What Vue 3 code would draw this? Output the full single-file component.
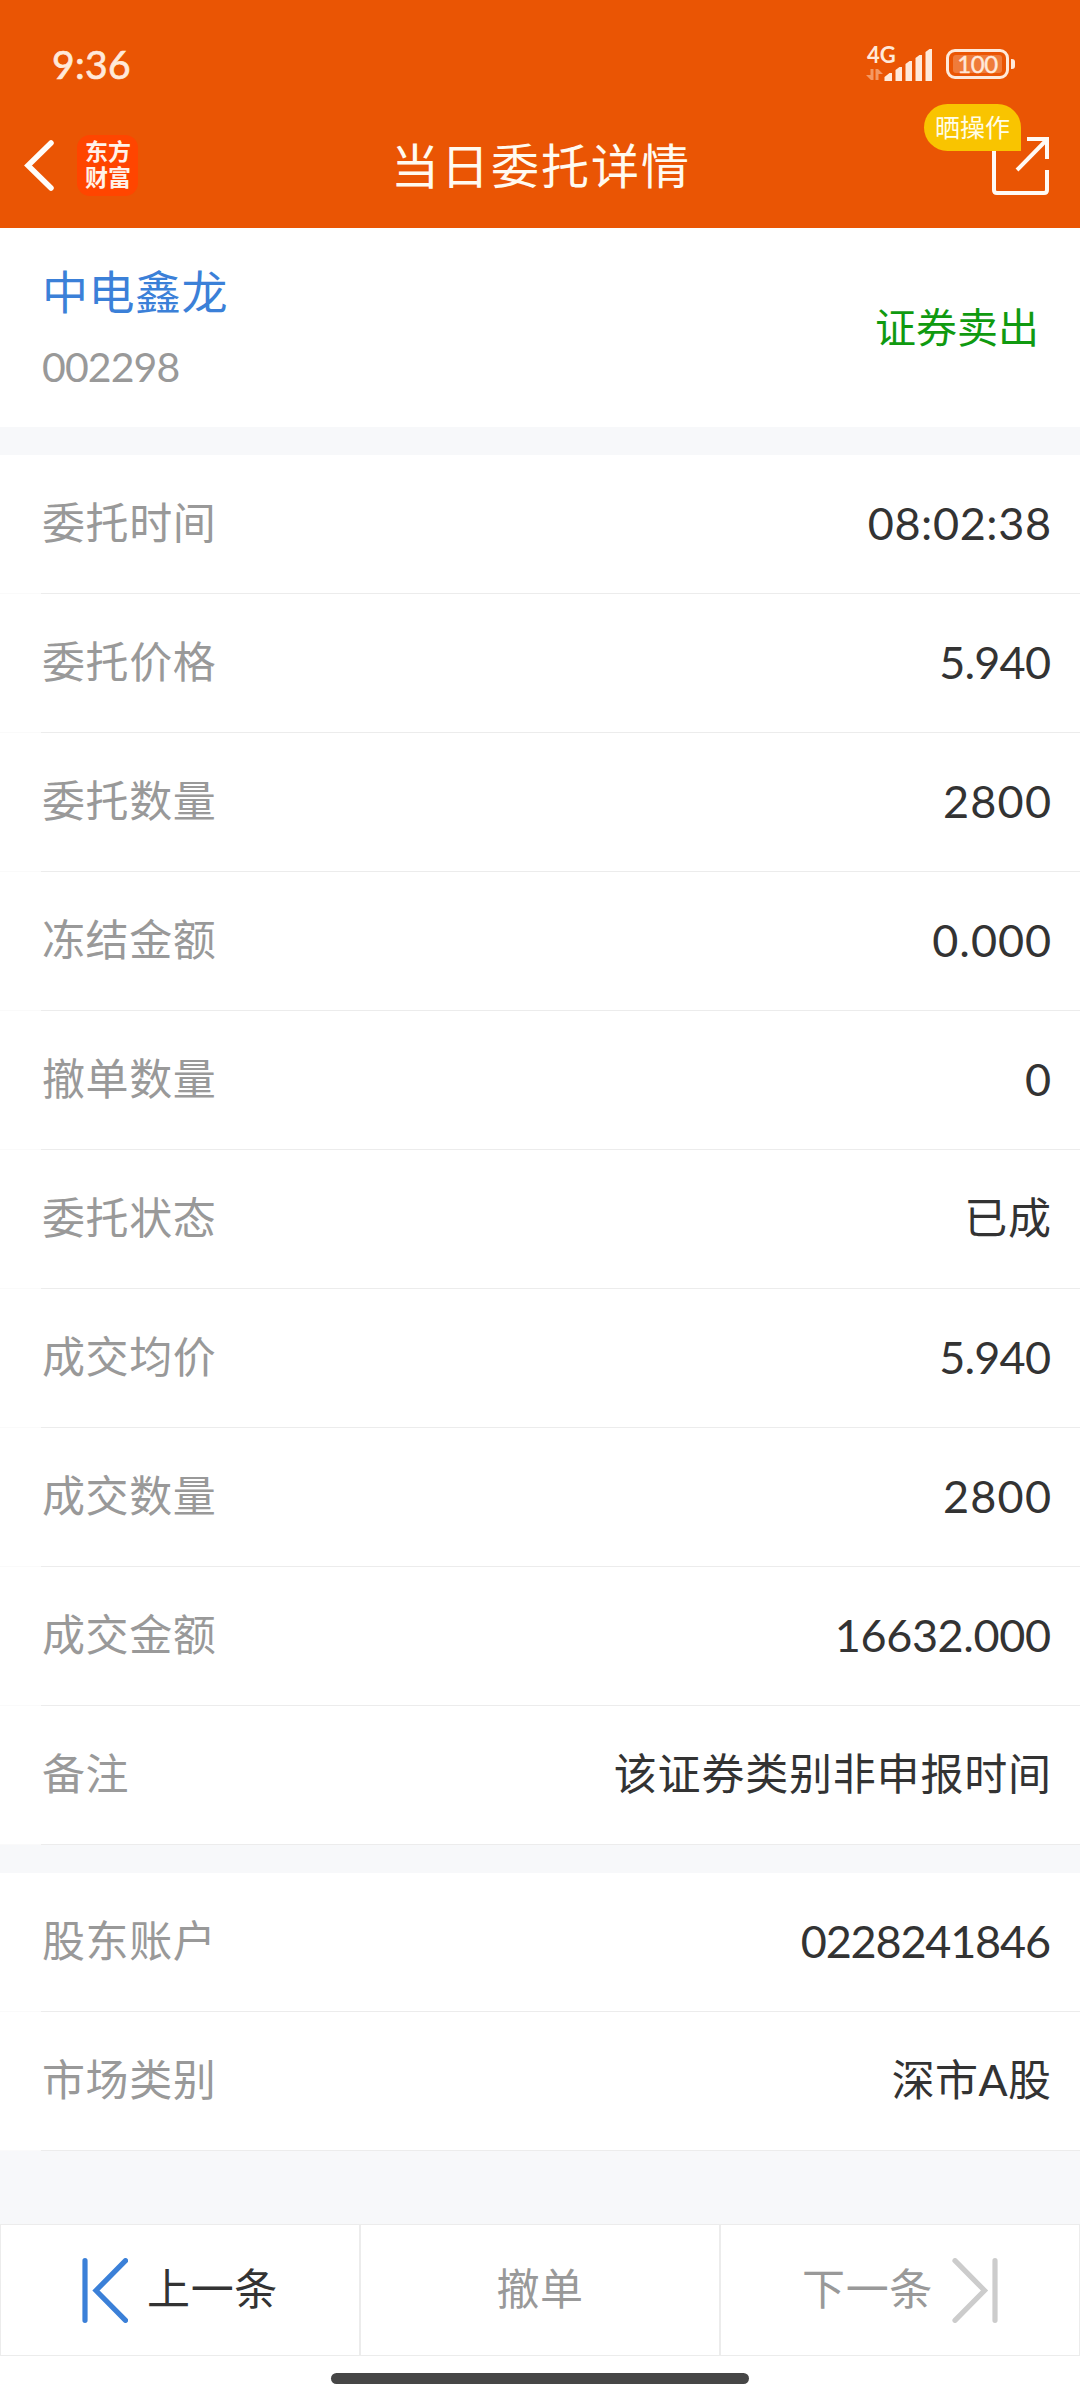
<template>
  <div class="page">
    <header class="header">
      <div class="status">
        <span class="time">9:36</span>
        <div class="status-right">
          <div class="signal">
            <span class="net">4G</span>
            <svg class="signal-icon" width="68" height="34" viewBox="0 0 68 34">
              <g fill="#ffe9da" opacity="0.45">
                <path d="M4.5 22h3v11h-2.500l-5-5h4.500z" />
                <path d="M9.500 33v-11h2.500l5 5h-4.500v6z" />
              </g>
              <g fill="#ffe9da">
                <path d="M18.500 34v-4l5-4h2.500v8z" />
                <path d="M29.500 34v-11l4-3h2.500v14z" />
                <path d="M39.500 34v-17l4-3h2.500v20z" />
                <path d="M49.500 34v-23l4-3h2.500v26z" />
                <path d="M59.500 34v-29l4-3h2.500v32z" />
              </g>
            </svg>
          </div>
          <div class="battery">
            <div class="battery-level">100</div>
          </div>
          <i class="battery-cap"></i>
        </div>
      </div>
      <nav class="nav">
        <div class="nav-left">
          <svg width="32" height="52" viewBox="0 0 32 52">
            <path d="M28 4L5 26.500l23 22.500" fill="none" stroke="#fffdfa" stroke-width="5.500" stroke-linecap="round" />
          </svg>
          <div class="logo">
            <span>东方财富</span>
          </div>
        </div>
        <h1 class="title">当日委托详情</h1>
        <div class="nav-right">
          <div class="share">
            <svg width="58" height="60" viewBox="0 0 58 60">
              <g fill="none" stroke="#fffaf5" stroke-width="4">
                <path d="M2 5v50q0 3 3 3h47q3 0 3-3V35" />
                <path d="M25 35L54.500 5M35 4h20v20" />
              </g>
            </svg>
            <span class="tip">晒操作</span>
          </div>
        </div>
      </nav>
    </header>

    <section class="stock">
      <div>
        <div class="stock-name">中电鑫龙</div>
        <div class="stock-code">002298</div>
      </div>
      <div class="side">证券卖出</div>
    </section>

    <section v-for="(group, i) in groups" :key="i" class="group">
      <div v-for="row in group" :key="row.label" class="row">
        <span class="label">{{ row.label }}</span>
        <span
          class="value"
          :class="{ cjk: row.cjk }"
          :style="{ letterSpacing: row.gap + 'px', marginRight: -row.gap + 'px' }"
        >{{ row.value }}</span>
      </div>
    </section>

    <div class="spacer"></div>

    <footer class="footer">
      <button class="btn active">
        <svg width="46" height="65" viewBox="0 0 46 65">
          <path d="M3 2.700v59.600M43.500 2.700L14 32.500l29.500 29.800" fill="none" stroke="#3b80d8" stroke-width="5.200" stroke-linecap="round" />
        </svg>
        <span>上一条</span>
      </button>
      <button class="btn"><span>撤单</span></button>
      <button class="btn">
        <span>下一条</span>
        <svg width="46" height="65" viewBox="0 0 46 65">
          <path d="M43 2.700v59.600M3 2.700L32.500 32.500L3 62.300" fill="none" stroke="#ccc" stroke-width="5.200" stroke-linecap="round" />
        </svg>
      </button>
    </footer>
    <div class="home"><i></i></div>
  </div>
</template>

<script setup>
// gap: letter spacing of the value in px
const groups = [
  [
    { label: '委托时间', value: '08:02:38', gap: 0.6 },
    { label: '委托价格', value: '5.940', gap: -0.8 },
    { label: '委托数量', value: '2800', gap: 1.2 },
    { label: '冻结金额', value: '0.000', gap: 0.9 },
    { label: '撤单数量', value: '0', gap: 0 },
    { label: '委托状态', value: '已成', gap: 0.8, cjk: true },
    { label: '成交均价', value: '5.940', gap: -0.8 },
    { label: '成交数量', value: '2800', gap: 1.2 },
    { label: '成交金额', value: '16632.000', gap: -0.4 },
    { label: '备注', value: '该证券类别非申报时间', gap: 0.8, cjk: true },
  ],
  [
    { label: '股东账户', value: '0228241846', gap: -1.2 },
    { label: '市场类别', value: '深市A股', gap: 0.4, cjk: true },
  ],
];
</script>

<style>
body {
  margin: 0;
  background: #fff;
}
</style>

<style scoped>
.page {
  width: 1080px;
  height: 2400px;
  display: flex;
  flex-direction: column;
  overflow: hidden;
  background: #f7f8fa;
  color: #333;
  font-family: Lato, "Noto Sans CJK SC", sans-serif;
}
.header {
  height: 228px;
  background: #ea5504;
}
.status {
  height: 102px;
  padding: 26px 65px 0 52px;
  box-sizing: border-box;
  display: flex;
  justify-content: space-between;
  align-items: center;
  color: #ffe9da;
}
.time {
  font-size: 39px;
  line-height: 50px;
  letter-spacing: 0.3px;
  -webkit-text-stroke: 0.7px #ffe9da;
}
.status-right {
  display: flex;
  align-items: center;
}
.signal {
  position: relative;
  width: 68px;
  height: 34px;
  margin-right: 12px;
}
.signal-icon {
  display: block;
}
.net {
  position: absolute;
  left: 1px;
  top: -4px;
  font-size: 22px;
  line-height: 24px;
  font-weight: 700;
}
.battery {
  width: 63px;
  height: 30px;
  box-sizing: border-box;
  padding: 3px 4px;
  border: 3px solid #ffe9da;
  border-radius: 9px;
}
.battery-level {
  height: 18px;
  border-radius: 3px;
  background: rgba(255, 233, 218, 0.26);
  font-size: 24px;
  line-height: 17px;
  letter-spacing: -0.5px;
  text-align: center;
  -webkit-text-stroke: 0.4px #ffe9da;
}
.battery-cap {
  width: 4px;
  height: 10px;
  margin-left: 2px;
  border-radius: 0 3px 3px 0;
  background: #ffe9da;
}
.nav {
  height: 126px;
  display: grid;
  grid-template-columns: 1fr auto 1fr;
  align-items: center;
}
.nav-left {
  display: flex;
  align-items: center;
  gap: 22px;
  padding-left: 23px;
}
.logo {
  width: 61px;
  height: 61px;
  box-sizing: border-box;
  padding: 2px 7px 0 8px;
  border-radius: 13px;
  background: #ff4500;
  color: #fff2ea;
  font-family: "Noto Sans CJK SC", sans-serif;
  font-size: 23px;
  line-height: 26px;
  font-weight: 700;
}
.title {
  margin: 0;
  padding-top: 1px;
  font-size: 48px;
  line-height: 60px;
  font-weight: 400;
  letter-spacing: 2px;
  margin-right: -2px;
  color: #fffaf0;
}
.nav-right {
  display: flex;
  justify-content: flex-end;
  padding-right: 30px;
}
.share {
  position: relative;
  width: 58px;
  height: 60px;
}
.share svg {
  display: block;
}
.tip {
  position: absolute;
  right: 29px;
  top: -31px;
  width: 97px;
  height: 47px;
  border-radius: 24px 24px 0 24px;
  background: #f9c400;
  color: #fffde8;
  font-size: 25px;
  line-height: 47px;
  text-align: center;
}
.stock {
  height: 199px;
  box-sizing: border-box;
  padding: 0 41px 0 42px;
  display: flex;
  justify-content: space-between;
  align-items: center;
  background: #fff;
}
.stock-name {
  padding-top: 4px;
  font-size: 46px;
  line-height: 60px;
  letter-spacing: 0.5px;
  color: #3b80d8;
}
.stock-code {
  margin-top: 15px;
  font-size: 41px;
  line-height: 60px;
  letter-spacing: -0.9px;
  color: #999;
}
.side {
  font-size: 41px;
  line-height: 60px;
  color: #109a10;
}
.group {
  margin-top: 28px;
  background: #fff;
}
.row {
  height: 139px;
  box-sizing: border-box;
  padding: 0 29px 4px 42px;
  display: flex;
  justify-content: space-between;
  align-items: center;
  background: linear-gradient(to right, #fafafa 41px, #ececec 41px) bottom / 100% 1px no-repeat;
}
.label {
  font-size: 43px;
  line-height: 60px;
  letter-spacing: 0.6px;
  color: #999;
}
.value {
  font-size: 45px;
  line-height: 60px;
}
.value.cjk {
  font-size: 43px;
}
.spacer {
  flex: 1;
}
.footer {
  height: 132px;
  display: grid;
  grid-template-columns: repeat(3, 1fr);
}
.btn {
  margin: 0;
  padding: 0;
  border: 1px solid #ececec;
  background: #fff;
  color: #999;
  font-family: inherit;
  font-size: 43px;
  line-height: 60px;
  letter-spacing: 0.6px;
  display: flex;
  justify-content: center;
  align-items: center;
  gap: 19px;
}
.btn span {
  margin-top: -3px;
}
.btn.active {
  color: #333;
}
.home {
  height: 44px;
  display: flex;
  justify-content: center;
  background: #fff;
}
.home i {
  width: 418px;
  height: 11px;
  margin-top: 17px;
  border-radius: 6px;
  background: #464646;
}
</style>
